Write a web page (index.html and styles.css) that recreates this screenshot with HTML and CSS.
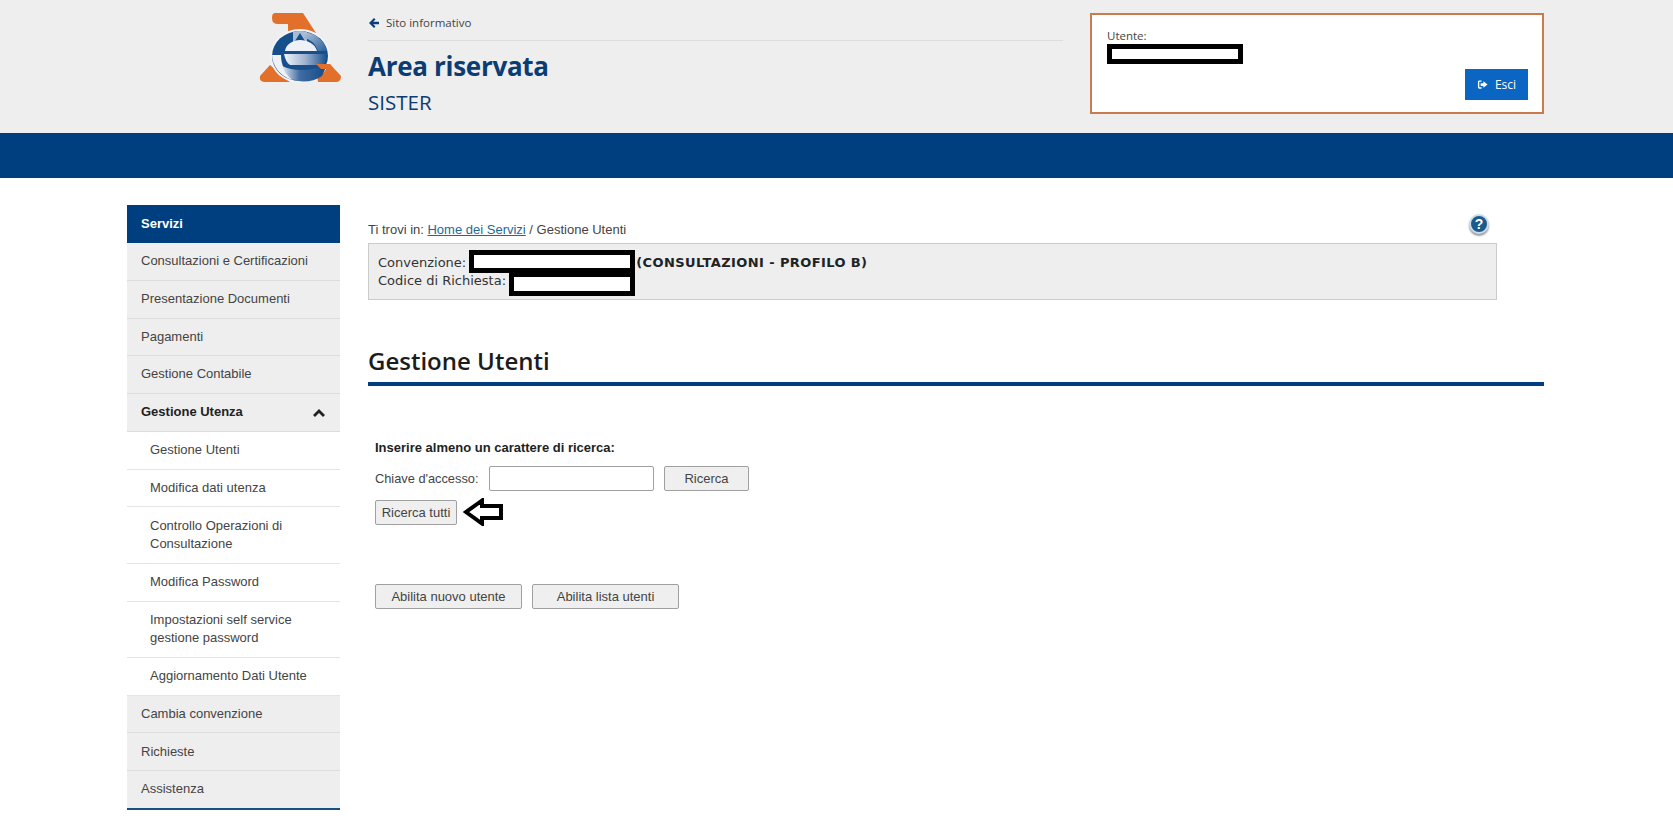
FILE: index.html
```html
<!DOCTYPE html>
<html lang="it">
<head>
  <meta charset="UTF-8">
  <title>Area riservata - SISTER</title>
  <link rel="stylesheet" href="styles.css">
</head>
<body>
  <!-- Testata -->
  <header class="top-header">
    <div class="logo-col">
      <svg class="logo" viewBox="0 0 81 70" width="81" height="70">
        <defs>
          <linearGradient id="ringGrad" x1="0" y1="0" x2="1" y2="0">
            <stop offset="0" stop-color="#f4f6fa"/>
            <stop offset="0.5" stop-color="#9db2cf"/>
            <stop offset="1" stop-color="#174f8c"/>
          </linearGradient>
          <linearGradient id="swooshGrad" x1="0" y1="0" x2="1" y2="0">
            <stop offset="0" stop-color="#e6ebf3"/>
            <stop offset="0.4" stop-color="#3f6ca3"/>
            <stop offset="1" stop-color="#134a86"/>
          </linearGradient>
          <linearGradient id="arcGrad" x1="0" y1="0" x2="1" y2="1">
            <stop offset="0" stop-color="#b4c4da"/>
            <stop offset="1" stop-color="#2a5f9a"/>
          </linearGradient>
        </defs>
        <path d="M15 0H43L56 20H28V11H18Q12 11 12 5Q12 0 15 0Z" fill="#e2702a"/>
        <path d="M10 52L30 69H5Q-1 69 0 63Z" fill="#e2702a"/>
        <path d="M56 51H70L81 63Q81 69 76 69H58Z" fill="#e2702a"/>
        <ellipse cx="40" cy="43" rx="30" ry="27" fill="#f2f4f8"/>
        <ellipse cx="40" cy="43" rx="28" ry="25" fill="#174f8c"/>
        <path d="M33 19Q40 17 47 19L47 29H33Z" fill="#a9bcd6"/>
        <path d="M44 19C55 20 64 27 67 38H58C56 31 50 26 44 25Z" fill="url(#arcGrad)"/>
        <path d="M40 20L45 28H35Z" fill="#174f8c"/>
        <path d="M25 38C26 31 33 27 40 27C48 27 55 31 57 38Z" fill="#eef1f6"/>
        <path d="M24 41H67C67 46 65 50 63 52H30C27 50 25 46 24 41Z" fill="url(#ringGrad)"/>
        <path d="M12 42C12 52 20 64 33 67C25 60 21 52 21 42Z" fill="#eef1f6"/>
        <path d="M22 53C34 59 52 58 67 52L62 63C52 70 38 70 30 65C27 62 24 58 22 53Z" fill="url(#swooshGrad)"/>
        <path d="M56 51H70L73 56H61Z" fill="#e2702a"/>
      </svg>
    </div>
    <div class="title-col">
      <a class="back-link" href="#">
        <svg class="back-arrow" viewBox="0 0 12 12" width="12" height="12"><path d="M6 1L1 6L6 11L7.5 9.5L5.2 7.2H11V4.8H5.2L7.5 2.5Z" fill="#0b3c73"/></svg>
        Sito informativo
      </a>
      <h1 class="app-title">Area riservata</h1>
      <div class="app-sub">SISTER</div>
    </div>
    <div class="user-box">
      <div class="user-label">Utente:</div>
      <div class="redact redact-user"></div>
      <button class="btn-exit">
        <svg viewBox="0 0 12 12" width="11" height="11"><path d="M5 1.5H2.5Q1 1.5 1 3V9Q1 10.5 2.5 10.5H5V9H2.5V3H5ZM7 2.5V4.5H4V7.5H7V9.5L11.5 6Z" fill="#fff"/></svg>
        Esci
      </button>
    </div>
  </header>
  <div class="blue-band"></div>

  <div class="page">
    <!-- Menu laterale -->
    <nav class="side-menu">
      <div class="menu-head">Servizi</div>
      <a class="menu-item" href="#">Consultazioni e Certificazioni</a>
      <a class="menu-item" href="#">Presentazione Documenti</a>
      <a class="menu-item" href="#">Pagamenti</a>
      <a class="menu-item" href="#">Gestione Contabile</a>
      <a class="menu-item open" href="#">
        Gestione Utenza
        <svg viewBox="0 0 12 8" width="12" height="8"><path d="M6 0L12 6L10 8L6 4L2 8L0 6Z" fill="#222"/></svg>
      </a>
      <a class="menu-item sub" href="#">Gestione Utenti</a>
      <a class="menu-item sub" href="#">Modifica dati utenza</a>
      <a class="menu-item sub" href="#">Controllo Operazioni di<br>Consultazione</a>
      <a class="menu-item sub" href="#">Modifica Password</a>
      <a class="menu-item sub" href="#">Impostazioni self service<br>gestione password</a>
      <a class="menu-item sub" href="#">Aggiornamento Dati Utente</a>
      <a class="menu-item" href="#">Cambia convenzione</a>
      <a class="menu-item" href="#">Richieste</a>
      <a class="menu-item last" href="#">Assistenza</a>
    </nav>

    <main class="content">
      <div class="crumb-row">
        <div class="crumb">Ti trovi in: <a href="#">Home dei Servizi</a> / Gestione Utenti</div>
        <div class="help-icon">?</div>
      </div>
      <div class="info-box">
        <div class="info-line">Convenzione: <span class="redact redact-conv"></span><b>(CONSULTAZIONI - PROFILO B)</b></div>
        <div class="info-line">Codice di Richiesta: <span class="redact redact-code"></span></div>
      </div>

      <h2 class="page-title">Gestione Utenti</h2>

      <form class="search-form">
        <p class="form-hint">Inserire almeno un carattere di ricerca:</p>
        <div class="form-row">
          <label for="chiave">Chiave d'accesso:</label>
          <input type="text" id="chiave">
          <button type="button" class="btn btn-search">Ricerca</button>
        </div>
        <div class="form-row row-all">
          <button type="button" class="btn btn-all">Ricerca tutti</button>
          <svg class="hint-arrow" viewBox="0 0 40 28" width="40" height="28"><path d="M19 2.5L3 14L19 25.5V20H38V8H19Z" fill="#fff" stroke="#000" stroke-width="4"/></svg>
        </div>
        <div class="form-row row-actions">
          <button type="button" class="btn btn-wide">Abilita nuovo utente</button>
          <button type="button" class="btn btn-wide">Abilita lista utenti</button>
        </div>
      </form>
    </main>
  </div>
</body>
</html>
```

FILE: styles.css
```css
* {
  box-sizing: border-box;
}
body {
  margin: 0;
  font-family: "Liberation Sans", Arial, sans-serif;
  font-size: 13px;
  color: #444;
  background-color: #fff;
}
.top-header {
  height: 133px;
  background-color: #eeeeee;
  display: flex;
}
.logo-col {
  width: 368px;
  padding: 13px 0 0 260px;
}
.logo {
  display: block;
}
.title-col {
  width: 695px;
  font-family: "Open Sans", sans-serif;
  color: #0b3c73;
  padding-top: 15px;
}
.back-link {
  display: flex;
  align-items: center;
  gap: 6px;
  height: 26px;
  padding-bottom: 10px;
  border-bottom: 1px solid #ddd;
  color: #444;
  font-size: 11.5px;
  text-decoration: none;
}
.app-title {
  margin: 7px 0 0;
  font-size: 26px;
  letter-spacing: -0.3px;
  line-height: 36px;
  font-weight: 700;
  color: #0b3c73;
}
.app-sub {
  margin-top: 6px;
  font-size: 20.5px;
  line-height: 24px;
  font-weight: 500;
}
.user-box {
  width: 454px;
  height: 101px;
  margin: 13px 0 0 27px;
  background: #fff;
  border: 2px solid #c97b4d;
  padding: 13px 15px;
  font-family: "Open Sans", sans-serif;
  position: relative;
}
.user-label {
  font-size: 11.5px;
  line-height: 15px;
  color: #444;
}
.redact {
  display: block;
  background: #fff;
  border: 5px solid #000;
}
.redact-user {
  width: 136px;
  height: 20px;
  margin-top: 1px;
}
.btn-exit {
  position: absolute;
  right: 14px;
  bottom: 12px;
  width: 63px;
  height: 31px;
  display: flex;
  align-items: center;
  justify-content: center;
  gap: 7px;
  background: #0a66c2;
  color: #fff;
  border: none;
  font-family: "Open Sans", sans-serif;
  font-size: 12px;
}
.blue-band {
  height: 45px;
  background-color: #003f7f;
}
.page {
  display: flex;
  padding: 27px 129px 0 127px;
}
.side-menu {
  width: 213px;
  flex-shrink: 0;
}
.menu-head {
  height: 38px;
  padding: 0 14px;
  line-height: 37px;
  background: #003f7f;
  color: #fff;
  font-size: 13px;
  font-weight: 700;
}
.menu-item {
  display: block;
  padding: 9.15px 14px;
  line-height: 18.5px;
  background: #eeeeee;
  border-bottom: 1px solid #dddddd;
  color: #444;
  text-decoration: none;
}
.menu-item.open {
  display: flex;
  justify-content: space-between;
  align-items: center;
  color: #222;
  font-weight: 700;
  padding-right: 15px;
}
.menu-item.sub {
  padding-left: 23px;
  background: #fff;
  border-bottom-color: #e4e4e4;
}
.menu-item.last {
  border-bottom: 2px solid #1b4f80;
}
.content {
  width: 1176px;
  margin-left: 28px;
}
.crumb-row {
  width: 1129px;
  height: 38px;
  display: flex;
  justify-content: space-between;
  align-items: flex-end;
  position: relative;
  padding-bottom: 6px;
  font-size: 13px;
}
.crumb a {
  color: #1c6a96;
}
.help-icon {
  position: absolute;
  right: 8px;
  top: 9px;
  width: 20px;
  height: 20px;
  border-radius: 50%;
  background: #1c5a8c;
  border: 2px solid #c9dcec;
  color: #fff;
  font-weight: 700;
  font-size: 14px;
  line-height: 16px;
  text-align: center;
  box-shadow: 0 2px 2px #999;
}
.info-box {
  width: 1129px;
  height: 57px;
  padding: 10px 9px;
  background: #eeeeee;
  border: 1px solid #cccccc;
  font-family: "DejaVu Sans", Verdana, sans-serif;
  font-size: 13px;
  line-height: 18px;
  color: #333;
}
.info-line {
  display: flex;
  height: 18px;
  align-items: center;
  gap: 3px;
}
.info-line b {
  letter-spacing: 0.4px;
  color: #222;
}
.redact-conv {
  width: 166px;
  height: 23px;
  margin-top: -4px;
  margin-right: -2px;
}
.redact-code {
  width: 126px;
  height: 24px;
  margin-top: 5px;
}
.page-title {
  margin: 41px 0 0;
  height: 45px;
  font-family: "Open Sans", sans-serif;
  font-size: 24px;
  line-height: 40px;
  font-weight: 600;
  color: #1c1c1c;
  border-bottom: 4px solid #003f7f;
}
.search-form {
  padding: 54px 0 0 7px;
  font-size: 13px;
}
.form-hint {
  margin: 0 0 11px;
  font-size: 13px;
  line-height: 15px;
  font-weight: 700;
  color: #222;
}
.form-row {
  display: flex;
  align-items: center;
}
.form-row label {
  width: 114px;
  font-size: 12.8px;
}
.form-row input {
  width: 165px;
  height: 25px;
  border: 1px solid #a0a0a0;
  border-radius: 2px;
  background: #fff;
}
.btn {
  height: 25px;
  padding: 0;
  background: #efefef;
  border: 1px solid #a0a0a0;
  border-radius: 2px;
  font-family: "Liberation Sans", Arial, sans-serif;
  font-size: 13px;
  color: #444;
}
.btn-search {
  width: 85px;
  margin-left: 10px;
}
.row-all {
  margin-top: 7px;
  gap: 6px;
}
.btn-all {
  width: 82px;
}
.row-actions {
  margin-top: 58px;
  gap: 10px;
}
.btn-wide {
  width: 147px;
}
```
